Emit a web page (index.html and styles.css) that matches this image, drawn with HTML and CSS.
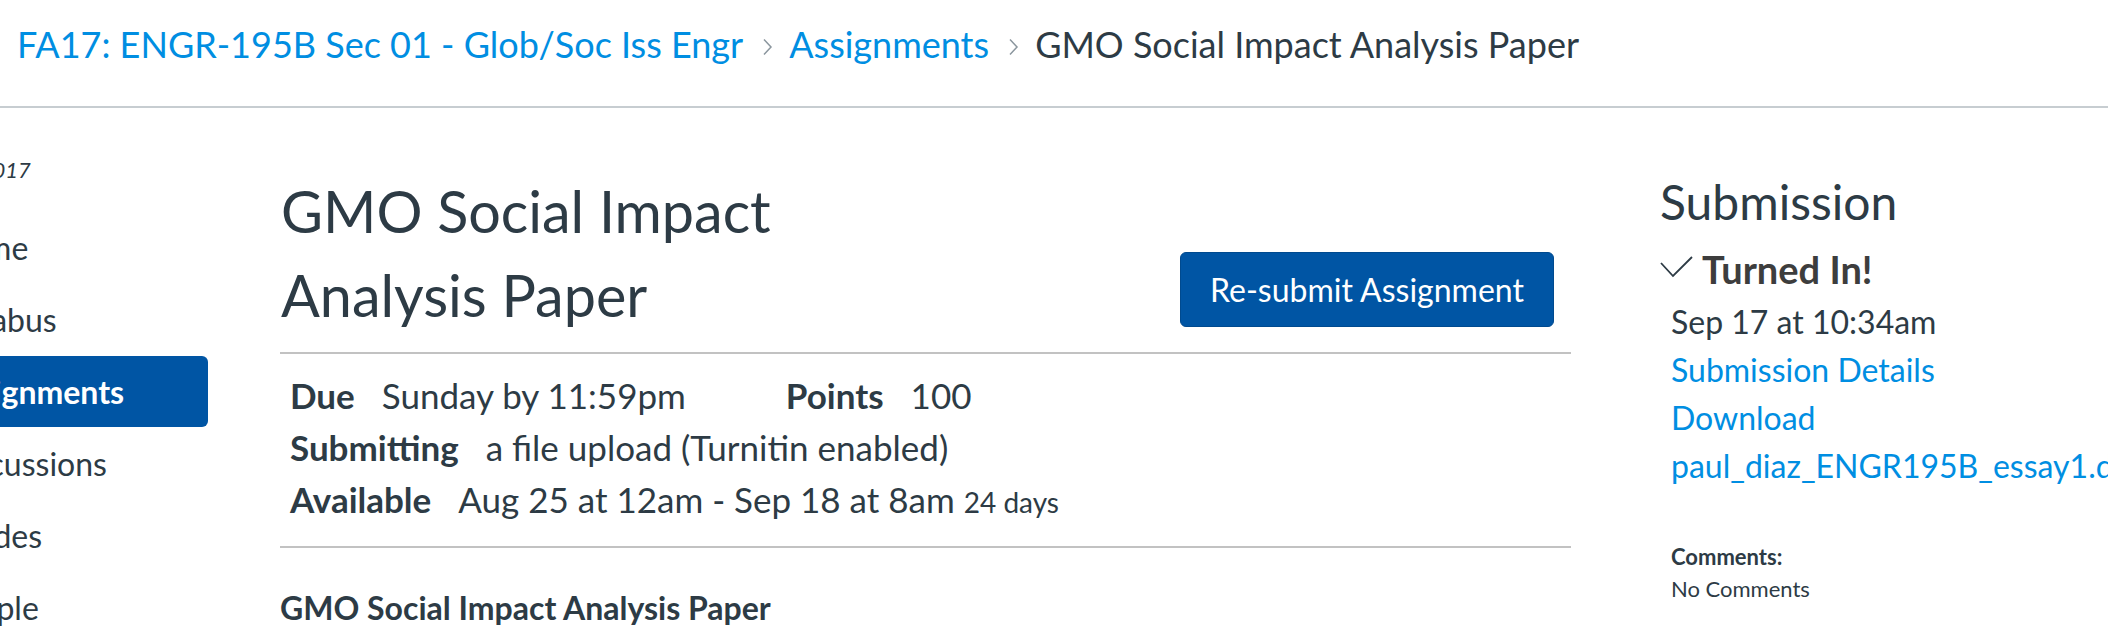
FILE: index.html
```html
<!DOCTYPE html>
<html lang="en">
<head>
<meta charset="utf-8">
<title>GMO Social Impact Analysis Paper</title>
<link rel="stylesheet" href="styles.css">
</head>
<body>
<div class="page">
  <header class="crumbs">
    <a class="crumb-link" href="#">FA17: ENGR-195B Sec 01 - Glob/Soc Iss Engr</a>
    <svg class="chev" width="11" height="18" viewBox="0 0 11 18" aria-hidden="true"><path d="M2 1.5 L9 9 L2 16.5" fill="none" stroke="#8b969e" stroke-width="1.5"/></svg>
    <a class="crumb-link" href="#">Assignments</a>
    <svg class="chev" width="11" height="18" viewBox="0 0 11 18" aria-hidden="true"><path d="M2 1.5 L9 9 L2 16.5" fill="none" stroke="#8b969e" stroke-width="1.5"/></svg>
    <span class="crumb-current">GMO Social Impact Analysis Paper</span>
  </header>
  <div class="layout">
    <nav class="course-nav">
      <div class="nav-inner">
        <div class="term">Fall 2017</div>
        <ul class="nav-list">
          <li class="nav-item">Home</li>
          <li class="nav-item">Syllabus</li>
          <li class="nav-item active">Assignments</li>
          <li class="nav-item">Discussions</li>
          <li class="nav-item">Grades</li>
          <li class="nav-item">People</li>
        </ul>
      </div>
    </nav>
    <main class="content">
      <div class="title-row">
        <h1 class="title">GMO Social Impact Analysis Paper</h1>
        <button class="btn-primary">Re-submit Assignment</button>
      </div>
      <div class="details">
        <div class="detail-row">
          <span class="pair pair-wide"><span class="label">Due</span><span class="value">Sunday by 11:59pm</span></span>
          <span class="pair"><span class="label">Points</span><span class="value">100</span></span>
        </div>
        <div class="detail-row">
          <span class="pair"><span class="label">Submitting</span><span class="value">a file upload (Turnitin enabled)</span></span>
        </div>
        <div class="detail-row">
          <span class="pair"><span class="label">Available</span><span class="value">Aug 25 at 12am - Sep 18 at 8am <small class="days">24 days</small></span></span>
        </div>
      </div>
      <h2 class="desc-title">GMO Social Impact Analysis Paper</h2>
    </main>
    <aside class="sidebar">
      <h2 class="side-title">Submission</h2>
      <div class="turned-in">
        <svg class="check" width="33" height="22" viewBox="0 0 33 22" aria-hidden="true"><path d="M1 7 L13 20 L32 1" fill="none" stroke="#2d3b45" stroke-width="1.8"/></svg>
        <span>Turned In!</span>
      </div>
      <div class="sub-info">
        <div>Sep 17 at 10:34am</div>
        <div><a href="#">Submission Details</a></div>
        <div><a href="#">Download</a></div>
        <div class="file"><a href="#">paul_diaz_ENGR195B_essay1.docx</a></div>
      </div>
      <div class="comments">
        <div class="comments-label">Comments:</div>
        <div>No Comments</div>
      </div>
    </aside>
  </div>
</div>
</body>
</html>
```
FILE: styles.css
```css
html, body {
  margin: 0;
  padding: 0;
  background: #fff;
  overflow: hidden;
}
body {
  font-family: Lato, "Open Sans", "Liberation Sans", sans-serif;
  color: #2d3b45;
  width: 2108px;
  height: 640px;
}
a {
  color: #008ee2;
  text-decoration: none;
}
.page {
  width: 2108px;
}

/* breadcrumbs */
.crumbs {
  box-sizing: border-box;
  height: 108px;
  border-bottom: 2px solid #c7cdd1;
  padding: 17px 0 0 17px;
  font-size: 36px;
  line-height: 54px;
  display: flex;
  align-items: flex-start;
  white-space: nowrap;
}
.chev {
  flex: none;
  margin: 21px 16px 0 19px;
}
.crumb-current {
  color: #2d3b45;
}

/* layout */
.layout {
  display: flex;
  align-items: flex-start;
}

/* course nav */
.course-nav {
  width: 208px;
  flex: none;
  overflow: hidden;
  margin-right: 72px;
}
.nav-inner {
  margin-left: -59px;
  padding-top: 46px;
}
.term {
  font-size: 22px;
  line-height: 32px;
  font-style: italic;
  color: #2d3b45;
  margin-left: 2px;
  white-space: nowrap;
}
.nav-list {
  list-style: none;
  margin: 26px 0 0;
  padding: 0;
}
.nav-item {
  font-size: 32px;
  line-height: 55px;
  padding: 8px 0 8px 2px;
  margin-bottom: 1px;
  border-radius: 0 6px 6px 0;
  white-space: nowrap;
}
.nav-item.active {
  background: #0055a4;
  color: #fff;
  font-weight: bold;
}

/* main content */
.content {
  width: 1291px;
  flex: none;
  padding-top: 61px;
}
.title-row {
  display: flex;
  justify-content: space-between;
  align-items: flex-end;
  border-bottom: 2px solid #c2c2c2;
  padding-bottom: 15px;
}
.title {
  margin: 0;
  max-width: 620px;
  font-size: 57.5px;
  line-height: 84px;
  font-weight: normal;
  padding-left: 1px;
}
.btn-primary {
  font-family: inherit;
  font-size: 32px;
  line-height: 44px;
  color: #fff;
  background: #0055a4;
  border: 1px solid #004a8f;
  border-radius: 6px;
  width: 374px;
  height: 75px;
  padding: 0;
  margin: 0 17px 10px 0;
}
.details {
  border-bottom: 2px solid #c2c2c2;
  padding: 15px 0 18px 10px;
}
.detail-row {
  font-size: 35px;
  line-height: 52px;
  white-space: nowrap;
}
.pair-wide {
  display: inline-block;
  margin-right: 91px;
}
.label {
  font-weight: bold;
  margin-right: 27px;
}
.days {
  font-size: 28px;
}
.desc-title {
  margin: 36px 0 0;
  font-size: 32px;
  line-height: 48px;
  font-weight: bold;
}

/* sidebar */
.sidebar {
  margin-left: 89px;
  padding-top: 58px;
  white-space: nowrap;
}
.side-title {
  margin: 0;
  font-size: 48px;
  line-height: 72px;
  font-weight: normal;
}
.turned-in {
  display: flex;
  align-items: center;
  margin-top: 11px;
  margin-bottom: 9px;
  font-size: 38px;
  line-height: 40px;
  font-weight: bold;
  color: #3d3d3d;
}
.check {
  margin-right: 9px;
  margin-top: -4px;
}
.sub-info {
  padding-left: 11px;
  font-size: 32px;
  line-height: 48px;
}
.comments {
  padding-left: 11px;
  margin-top: 51px;
  font-size: 22px;
  line-height: 31.5px;
}
.comments-label {
  font-weight: bold;
}
```
